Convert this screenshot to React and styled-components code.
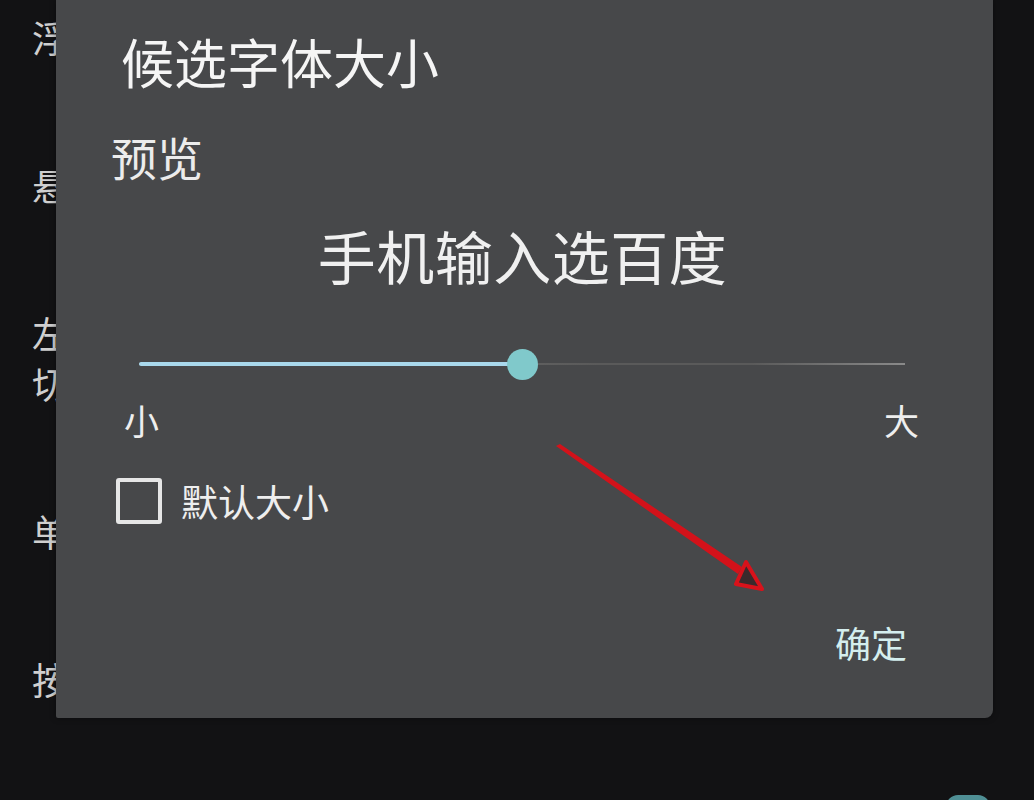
import React from "react";
import styled, { createGlobalStyle } from "styled-components";

const GlobalStyle = createGlobalStyle`
	html, body {
		margin: 0;
		padding: 0;
		background: #121214;
		overflow: hidden;
	}
	* {
		box-sizing: border-box;
	}
`;

const settings = [
	{ title: "浮动键盘" },
	{ title: "悬浮球设置" },
	{ title: "左右手模式", desc: "切换键盘位置" },
	{ title: "单手键盘" },
	{ title: "按键音效" },
];

const App = () => {
	const value = 0.5;

	return (
		<StyledPage>
			<GlobalStyle />
			<StyledList>
				{settings.map((item, index) => (
					<StyledItem key={index}>
						<div>{item.title}</div>
						{item.desc && <div>{item.desc}</div>}
					</StyledItem>
				))}
			</StyledList>
			<StyledFab />

			<StyledDialog>
				<StyledTitle>候选字体大小</StyledTitle>
				<StyledSection>预览</StyledSection>
				<StyledPreview>手机输入选百度</StyledPreview>

				<StyledSlider>
					<StyledTrack />
					<StyledActive style={{ width: `${value * 100}%` }} />
					<StyledThumb style={{ left: `${value * 100}%` }} />
				</StyledSlider>

				<StyledScale>
					<span>小</span>
					<span>大</span>
				</StyledScale>

				<StyledCheckRow>
					<StyledBox />
					<span>默认大小</span>
				</StyledCheckRow>

				<StyledActions>
					<StyledButton>确定</StyledButton>
				</StyledActions>
			</StyledDialog>

			<StyledArrow viewBox="0 0 1034 800" width="1034" height="800">
				<polygon
					points="556,446 560,444 742,567 738,574"
					fill="#d3121a"
				/>
				<polygon
					points="762,589 746,562 736,584"
					fill="#3a2a2c"
					stroke="#d8121b"
					strokeWidth="4"
					strokeLinejoin="round"
				/>
			</StyledArrow>
		</StyledPage>
	);
};

const StyledPage = styled.div`
	position: relative;
	display: flex;
	flex-direction: column;
	height: 800px;
	overflow: hidden;
	background: #121214;
	font-family: "Noto Sans CJK SC", "Noto Sans", sans-serif;
`;

const StyledList = styled.div`
	display: flex;
	flex-direction: column;
	gap: 98px;
	width: 56px;
	overflow: hidden;
	padding: 12px 0 0 32px;
`;

const StyledItem = styled.div`
	color: #cfcfcf;
	font-size: 37px;
	line-height: 50px;
	white-space: nowrap;
`;

const StyledFab = styled.div`
	align-self: flex-end;
	margin-top: auto;
	margin-right: 44px;
	margin-bottom: -40px;
	width: 44px;
	height: 45px;
	border-radius: 12px;
	background: #4f8f95;
`;

const StyledDialog = styled.div`
	position: absolute;
	top: 0;
	left: 56px;
	width: 937px;
	height: 718px;
	display: flex;
	flex-direction: column;
	background: #47484a;
	border-radius: 0 0 8px 2px;
	box-shadow: 0 0 6px rgba(0, 0, 0, 0.4);
	color: #f1f1f1;
`;

const StyledTitle = styled.div`
	margin: 35px 0 0 65px;
	font-size: 53px;
	line-height: 1;
	color: #f5f5f5;
`;

const StyledSection = styled.div`
	margin: 45px 0 0 55px;
	font-size: 46px;
	line-height: 1;
	color: #ececec;
`;

const StyledPreview = styled.div`
	margin-top: 47px;
	padding-right: 4px;
	text-align: center;
	font-size: 58px;
	line-height: 1;
	letter-spacing: 0.5px;
	color: #f0f0f0;
`;

const StyledSlider = styled.div`
	position: relative;
	margin: 64px 88px 0 83px;
	height: 32px;
`;

const StyledTrack = styled.div`
	position: absolute;
	left: 0;
	right: 0;
	top: 15px;
	height: 2px;
	background: linear-gradient(
		to right,
		#7a7a7a 0%,
		#5a5a5a 60%,
		#5a5a5a 80%,
		#8a8a8a 100%
	);
`;

const StyledActive = styled.div`
	position: absolute;
	left: 0;
	top: 14px;
	height: 4px;
	border-radius: 2px;
	background: #a9d8ec;
`;

const StyledThumb = styled.div`
	position: absolute;
	top: 1px;
	width: 31px;
	height: 31px;
	margin-left: -15px;
	border-radius: 50%;
	background: #80c9cb;
`;

const StyledScale = styled.div`
	display: flex;
	justify-content: space-between;
	margin: 22px 74px 0 68px;
	font-size: 35px;
	line-height: 1;
	color: #eeeeee;
`;

const StyledCheckRow = styled.div`
	display: flex;
	align-items: center;
	gap: 19px;
	margin: 41px 0 0 60px;
	font-size: 37px;
	line-height: 1;
	color: #eeeeee;
`;

const StyledBox = styled.div`
	width: 46px;
	height: 46px;
	border: 4px solid #e6e6e6;
	border-radius: 3px;
`;

const StyledActions = styled.div`
	display: flex;
	justify-content: flex-end;
	margin: 100px 86px 0 0;
`;

const StyledButton = styled.div`
	font-size: 36px;
	line-height: 1;
	color: #d4eeee;
`;

const StyledArrow = styled.svg`
	position: absolute;
	top: 0;
	left: 0;
	pointer-events: none;
`;

export default App;
